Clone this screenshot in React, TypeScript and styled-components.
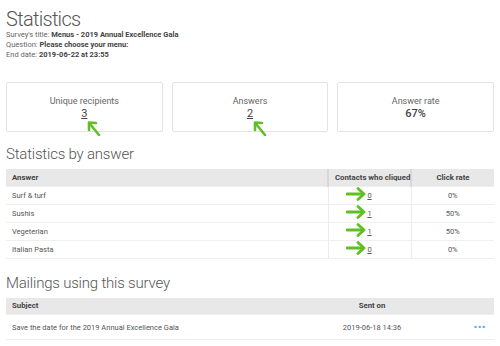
import styled, { createGlobalStyle } from "styled-components";

const GlobalStyle = createGlobalStyle`
  html, body {
    margin: 0;
    background: #fff;
  }
  body {
    font-family: Roboto, "Liberation Sans", sans-serif;
    color: #555;
  }
`;

const Page = styled.div`
  width: 500px;
  padding: 8px 6px 0;
  box-sizing: border-box;
`;

const Title = styled.h1`
  margin: 0;
  font-size: 20px;
  font-weight: 300;
  letter-spacing: -0.7px;
  line-height: 22px;
  color: #555;
`;

const Meta = styled.div`
  font-size: 7.5px;
  line-height: 10px;
  color: #666;
  & b {
    color: #444;
    font-weight: 700;
  }
`;

const Cards = styled.div`
  display: grid;
  grid-template-columns: repeat(3, 1fr);
  gap: 9px;
  margin-top: 22px;
`;

const Card = styled.div`
  position: relative;
  height: 50px;
  border: 1px solid #e3e3e3;
  border-radius: 2px;
  box-sizing: border-box;
  display: flex;
  flex-direction: column;
  align-items: center;
  padding-top: 13px;
`;

const CardLabel = styled.div`
  font-size: 9px;
  line-height: 11px;
  color: #666;
`;

const CardValue = styled.div<{ $link?: boolean }>`
  font-size: 11px;
  line-height: 14px;
  color: #444;
  font-weight: ${({ $link }) => ($link ? 400 : 500)};
  text-decoration: ${({ $link }) => ($link ? "underline" : "none")};
`;

const DiagArrow = styled.svg`
  position: absolute;
  left: calc(50% + 3px);
  top: 37px;
`;

const Heading = styled.h2<{ $top: number }>`
  margin: ${({ $top }) => $top}px 0 6px;
  font-size: 15px;
  font-weight: 300;
  letter-spacing: -0.2px;
  line-height: 18px;
  color: #555;
`;

const Table = styled.table`
  width: 100%;
  border-collapse: collapse;
  table-layout: fixed;
  font-size: 7.5px;
  color: #555;
`;

const Th = styled.th<{ $w?: number; $center?: boolean; $split?: boolean }>`
  box-sizing: border-box;
  background: #e8e8e8;
  height: 17px;
  padding: 0 6px;
  font-size: 7.8px;
  font-weight: 700;
  white-space: nowrap;
  color: #444;
  text-align: ${({ $center }) => ($center ? "center" : "left")};
  width: ${({ $w }) => ($w ? `${$w}px` : "auto")};
  border-left: ${({ $split }) => ($split ? "2px solid #d8d8d8" : "none")};
`;

const Td = styled.td<{ $center?: boolean; $h?: number; $split?: boolean }>`
  box-sizing: border-box;
  height: ${({ $h }) => $h ?? 18}px;
  padding: 0 6px;
  text-align: ${({ $center }) => ($center ? "center" : "left")};
  border-top: 1px solid #efefef;
  border-left: ${({ $split }) => ($split ? "1px solid #ececec" : "none")};
`;

const Tr = styled.tr`
  &:last-child td {
    border-bottom: 1px solid #efefef;
  }
`;

const Count = styled.span`
  position: relative;
  text-decoration: underline;
`;

const RightArrow = styled.svg`
  position: absolute;
  right: 6px;
  top: -4px;
`;

const Dots = styled.span`
  color: #3ab3e6;
  font-size: 9px;
  letter-spacing: 1px;
  font-weight: 700;
`;

const GREEN = "#5fbf25";

const UpLeftArrow = () => (
  <DiagArrow width="14" height="16" viewBox="0 0 14 16">
    <path d="M12 15 L3 4" stroke={GREEN} strokeWidth="2.6" strokeLinecap="round" fill="none" />
    <path d="M2 10 L2 2.5 L9 3" stroke={GREEN} strokeWidth="2.6" strokeLinecap="round" strokeLinejoin="round" fill="none" />
  </DiagArrow>
);

const GreenRight = () => (
  <RightArrow width="20" height="14" viewBox="0 0 20 14">
    <path d="M1 7 L17 7" stroke={GREEN} strokeWidth="2.8" strokeLinecap="round" fill="none" />
    <path d="M12 1.5 L18 7 L12 12.5" stroke={GREEN} strokeWidth="2.8" strokeLinecap="round" strokeLinejoin="round" fill="none" />
  </RightArrow>
);

const answers = [
  { label: "Surf & turf", count: 0, rate: "0%" },
  { label: "Sushis", count: 1, rate: "50%" },
  { label: "Vegeterian", count: 1, rate: "50%" },
  { label: "Italian Pasta", count: 0, rate: "0%" },
];

export default function App() {
  return (
    <Page>
      <GlobalStyle />
      <Title>Statistics</Title>
      <Meta>
        Survey's title: <b>Menus - 2019 Annual Excellence Gala</b>
      </Meta>
      <Meta>
        Question: <b>Please choose your menu:</b>
      </Meta>
      <Meta>
        End date: <b>2019-06-22 at 23:55</b>
      </Meta>

      <Cards>
        <Card>
          <CardLabel>Unique recipients</CardLabel>
          <CardValue $link>3</CardValue>
          <UpLeftArrow />
        </Card>
        <Card>
          <CardLabel>Answers</CardLabel>
          <CardValue $link>2</CardValue>
          <UpLeftArrow />
        </Card>
        <Card>
          <CardLabel>Answer rate</CardLabel>
          <CardValue>67%</CardValue>
        </Card>
      </Cards>

      <Heading $top={13}>Statistics by answer</Heading>
      <Table>
        <thead>
          <tr>
            <Th>Answer</Th>
            <Th $w={83} $center $split>
              Contacts who cliqued
            </Th>
            <Th $w={83} $center $split>
              Click rate
            </Th>
          </tr>
        </thead>
        <tbody>
          {answers.map((a) => (
            <Tr key={a.label}>
              <Td>{a.label}</Td>
              <Td $center $split>
                <Count>
                  <GreenRight />
                  {a.count}
                </Count>
              </Td>
              <Td $center $split>
                {a.rate}
              </Td>
            </Tr>
          ))}
        </tbody>
      </Table>

      <Heading $top={15}>Mailings using this survey</Heading>
      <Table>
        <thead>
          <tr>
            <Th>Subject</Th>
            <Th $w={188} $center>
              Sent on
            </Th>
            <Th $w={28} />
          </tr>
        </thead>
        <tbody>
          <Tr>
            <Td $h={25}>Save the date for the 2019 Annual Excellence Gala</Td>
            <Td $h={25} $center>
              2019-06-18 14:36
            </Td>
            <Td $h={25} $center>
              <Dots>•••</Dots>
            </Td>
          </Tr>
        </tbody>
      </Table>
    </Page>
  );
}
